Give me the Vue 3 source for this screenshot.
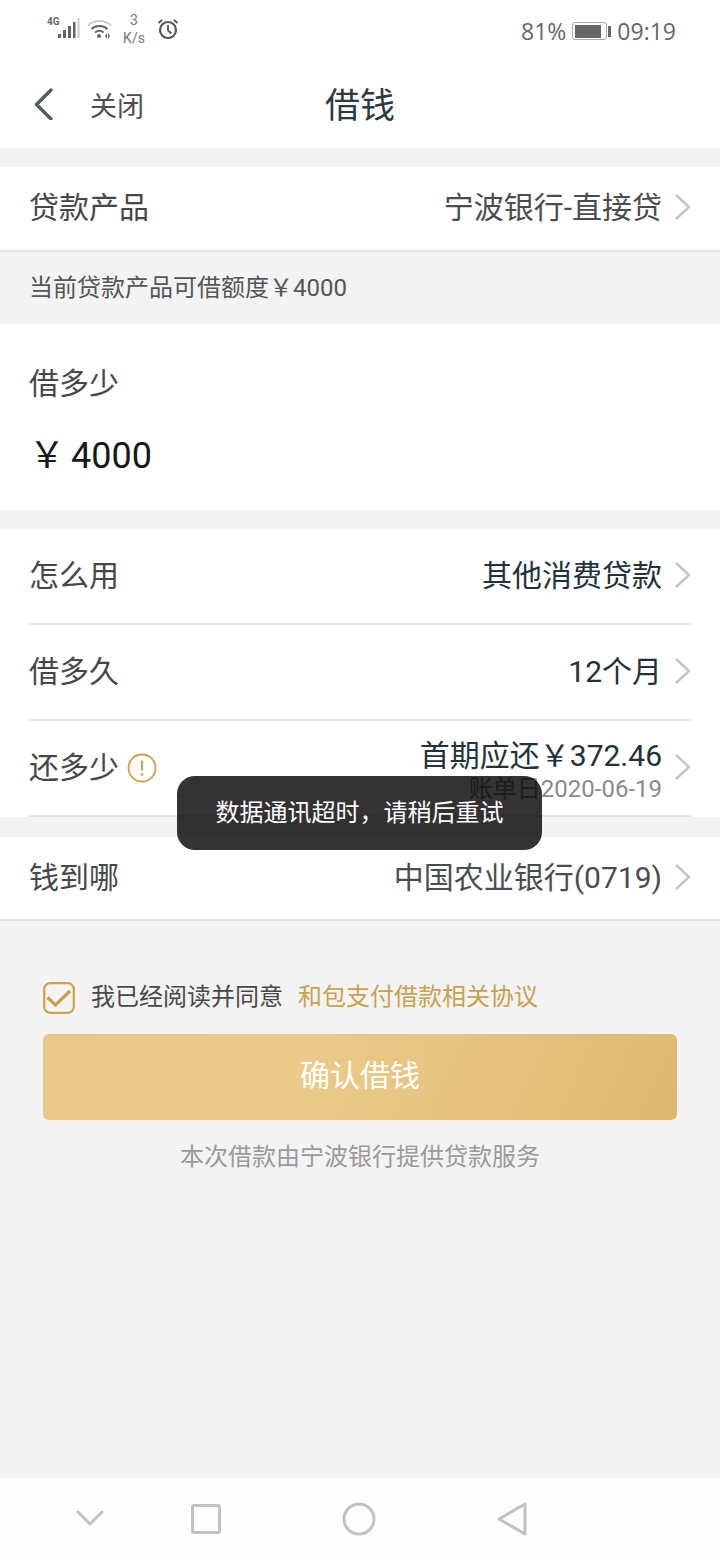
<script setup>
const sections = [
  { label: '怎么用', value: '其他消费贷款' },
  { label: '借多久', value: '12个月' },
]
</script>

<template>
  <div class="page">
    <div class="status">
      <div class="status-left">
        <div class="net">
          <span class="net-label">4G</span>
          <svg class="signal" width="22" height="22" viewBox="0 0 22 22">
            <rect x="0" y="16" width="3" height="4" fill="#666" />
            <rect x="5" y="12" width="3" height="8" fill="#666" />
            <rect x="10" y="8" width="3" height="12" fill="#666" />
            <rect x="15" y="4" width="2.5" height="16" fill="#666" />
            <rect x="19.5" y="0" width="2" height="20" fill="#ccc" />
          </svg>
        </div>
        <svg class="wifi" width="26" height="22" viewBox="0 0 26 22" fill="none">
          <path d="M1 7.5C7 1.5 18 1.5 24 7.5" stroke="#ccc" stroke-width="2" />
          <path d="M4.5 11C9 7 16 7 20.5 11" stroke="#666" stroke-width="2" />
          <path d="M8 14.5C10.5 12.5 14 12.5 16.5 14.5" stroke="#666" stroke-width="2" />
          <circle cx="12" cy="18" r="2" fill="#666" />
          <path d="M18 19l2-3v6zM23 19l-2-3v6z" fill="#666" transform="translate(0 -1)" />
        </svg>
        <div class="speed"><span>3</span><span>K/s</span></div>
        <svg class="alarm" width="22" height="22" viewBox="0 0 22 22" fill="none">
          <circle cx="11" cy="12" r="8" stroke="#555" stroke-width="2.2" />
          <path d="M11 7v5.5l3.5 3" stroke="#555" stroke-width="1.8" />
          <path d="M1.5 5l3.5-3M20.5 5L17 2" stroke="#555" stroke-width="2" />
        </svg>
      </div>
      <div class="status-right">
        <span>81%</span>
        <div class="battery"><div class="battery-body"><div class="battery-fill"></div></div><div class="battery-cap"></div></div>
        <span>09:19</span>
      </div>
    </div>

    <header class="header">
      <div class="header-left">
        <svg width="20" height="32" viewBox="0 0 20 32" fill="none">
          <path d="M18 2L3.5 16.5L18 31" stroke="#555d60" stroke-width="3.4" stroke-linecap="round" stroke-linejoin="round" />
        </svg>
        <span class="close">关闭</span>
      </div>
      <h1 class="title">借钱</h1>
    </header>

    <section class="group first">
      <div class="row short bordered-full">
        <span class="label">贷款产品</span>
        <div class="right">
          <span class="value muted">宁波银行-直接贷</span>
          <svg class="chev" width="18" height="28" viewBox="0 0 18 28" fill="none"><path d="M2 2l13 12L2 26" stroke="#c4c4c4" stroke-width="2.4" /></svg>
        </div>
      </div>
    </section>
    <div class="hint">当前贷款产品可借额度￥4000</div>

    <section class="amount">
      <div class="label">借多少</div>
      <div class="amount-value"><span class="yen">￥</span><span>4000</span></div>
    </section>

    <section class="group gap">
      <div v-for="item in sections" :key="item.label" class="row tall inset">
        <span class="label">{{ item.label }}</span>
        <div class="right">
          <span class="value">{{ item.value }}</span>
          <svg class="chev" width="18" height="28" viewBox="0 0 18 28" fill="none"><path d="M2 2l13 12L2 26" stroke="#c4c4c4" stroke-width="2.4" /></svg>
        </div>
      </div>
      <div class="row tall inset">
        <div class="label-wrap">
          <span class="label">还多少</span>
          <svg width="30" height="30" viewBox="0 0 30 30" fill="none">
            <circle cx="15" cy="15" r="13.5" stroke="#c9a24f" stroke-width="1.8" />
            <path d="M15 7.5v10" stroke="#c9a24f" stroke-width="2" />
            <circle cx="15" cy="21.5" r="1.3" fill="#c9a24f" />
          </svg>
        </div>
        <div class="right">
          <div class="stack">
            <span class="value">首期应还￥372.46</span>
            <span class="sub">账单日2020-06-19</span>
          </div>
          <svg class="chev" width="18" height="28" viewBox="0 0 18 28" fill="none"><path d="M2 2l13 12L2 26" stroke="#c4c4c4" stroke-width="2.4" /></svg>
        </div>
      </div>
    </section>

    <section class="group gap-last">
      <div class="row shorter bordered-full">
        <span class="label">钱到哪</span>
        <div class="right">
          <span class="value muted">中国农业银行(0719)</span>
          <svg class="chev" width="18" height="28" viewBox="0 0 18 28" fill="none"><path d="M2 2l13 12L2 26" stroke="#c4c4c4" stroke-width="2.4" /></svg>
        </div>
      </div>
    </section>

    <div class="bottom">
      <div class="agree">
        <svg width="32" height="32" viewBox="0 0 32 32" fill="none">
          <rect x="1.2" y="1.2" width="29.6" height="29.6" rx="6" stroke="#c9a24f" stroke-width="2.2" />
          <path d="M4.5 15.5l8 7.5L27 9" stroke="#c9a24f" stroke-width="3.2" />
        </svg>
        <span class="agree-text">我已经阅读并同意</span>
        <span class="agree-link">和包支付借款相关协议</span>
      </div>
      <button class="confirm">确认借钱</button>
      <p class="note">本次借款由宁波银行提供贷款服务</p>
    </div>

    <nav class="nav">
      <svg class="nav-down" width="28" height="20" viewBox="0 0 28 20" fill="none"><path d="M2 3l12 12L26 3" stroke="#c2c2c2" stroke-width="3" stroke-linecap="round" stroke-linejoin="round" /></svg>
      <svg width="30" height="30" viewBox="0 0 30 30" fill="none"><rect x="1.5" y="1.5" width="27" height="27" rx="1.5" stroke="#c2c2c2" stroke-width="3" /></svg>
      <svg width="34" height="34" viewBox="0 0 34 34" fill="none"><circle cx="17" cy="17" r="15" stroke="#c2c2c2" stroke-width="3" /></svg>
      <svg width="30" height="34" viewBox="0 0 30 34" fill="none"><path d="M28 2v30L2 17z" stroke="#c2c2c2" stroke-width="3" stroke-linejoin="round" /></svg>
    </nav>

    <div class="toast">数据通讯超时，请稍后重试</div>
  </div>
</template>

<style scoped>
.page {
  position: relative;
  width: 720px;
  height: 1560px;
  display: flex;
  flex-direction: column;
  background: #f3f3f3;
  overflow: hidden;
  font-family: Roboto, "Noto Sans CJK SC", sans-serif;
  color: #3b3f40;
}
.status {
  height: 62px;
  background: #fff;
  display: flex;
  align-items: center;
  justify-content: space-between;
  padding: 0 44px 0 47px;
}
.status-left { display: flex; align-items: center; height: 58px; margin-bottom: 4px; }
.net { display: flex; align-items: flex-end; width: 33px; height: 24px; position: relative; }
.net-label { font-size: 10px; line-height: 10px; font-weight: 700; color: #666; position: absolute; left: 0; top: 0; }
.signal { position: absolute; left: 11px; top: 1px; }
.wifi { margin-left: 7px; }
.speed {
  display: flex; flex-direction: column; align-items: center; width: 26px; margin-left: 8px;
  font-size: 14px; line-height: 18px; color: #777;
}
.alarm { margin-left: 10px; }
.status-right { display: flex; align-items: center; gap: 6px; font-size: 23px; color: #666; font-family: "Open Sans", Roboto, sans-serif; }
.battery { display: flex; align-items: center; gap: 1px; }
.battery-body { width: 35px; height: 18px; border: 1.5px solid #aaa; border-radius: 3px; padding: 1.5px; box-sizing: border-box; }
.battery-fill { width: 86%; height: 100%; background: #666; }
.battery-cap { width: 3px; height: 11px; background: #666; }
.header {
  position: relative;
  height: 86px;
  background: #fff;
  display: flex;
  align-items: center;
  justify-content: center;
}
.header-left { position: absolute; left: 33px; top: 24px; display: flex; align-items: center; gap: 37px; height: 36px; }
.close { font-size: 27px; line-height: 36px; margin-top: 5px; color: #4a4f50; }
.title { margin: 4px 0 0; font-size: 35px; font-weight: 400; color: #2a3a42; line-height: 40px; }
.group { background: #fff; }
.first { margin-top: 19px; }
.gap { margin-top: 19px; }
.gap-last { margin-top: 20px; }
.row { display: flex; align-items: center; justify-content: space-between; box-sizing: border-box; }
.short { height: 85px; padding: 0 29px 2px; }
.shorter { height: 84px; padding: 0 29px; }
.bordered-full { border-bottom: 2px solid #e4e4e4; }
.tall { height: 96px; margin: 0 29px; border-bottom: 2px solid #e4e4e4; }
.label { font-size: 30px; line-height: 36px; color: #444849; }
.label-wrap { display: flex; align-items: center; gap: 8px; }
.right { display: flex; align-items: center; gap: 12px; }
.value { font-size: 30px; color: #22323a; line-height: 36px; }
.muted { color: #484d4f; }
.stack { display: flex; flex-direction: column; align-items: flex-end; margin-top: 5px; }
.sub { font-size: 24px; line-height: 30px; color: #8a8a8a; }
.chev { display: block; margin-right: -1px; margin-bottom: 2px; }
.hint { height: 72px; display: flex; align-items: center; padding-left: 29px; font-size: 24px; line-height: 30px; color: #555; box-sizing: border-box; }
.amount { background: #fff; height: 186px; padding: 40px 29px 0; box-sizing: border-box; }
.amount .label { line-height: 40px; }
.amount-value { display: flex; align-items: center; margin-top: 30px; font-size: 36px; line-height: 44px; color: #15191b; }
.yen { width: 42px; text-align: left; font-size: 36px; line-height: 44px; }
.bottom { flex: 1; display: flex; flex-direction: column; padding: 0 43px; }
.agree { display: flex; align-items: center; margin-top: 60px; height: 34px; }
.agree-text { margin: 0 0 2px 16px; font-size: 24px; line-height: 30px; color: #484848; }
.agree-link { margin: 0 0 2px 15px; font-size: 24px; line-height: 30px; color: #c9a24f; }
.confirm {
  margin-top: 19px;
  height: 86px;
  width: 634px;
  border: 0;
  border-radius: 6px;
  background: linear-gradient(115deg, #e9c988 0%, #ebcb8b 40%, #deb86f 100%);
  color: #fff;
  font-size: 30px;
  line-height: 36px;
  font-family: inherit;
  padding: 0 0 2px;
}
.note { margin: 20px 0 0; text-align: center; font-size: 24px; line-height: 34px; color: #9a9a9a; }
.nav {
  height: 82px;
  background: #fdfdfd;
  display: flex;
  align-items: center;
  padding-left: 76px;
  gap: 121px;
}
.nav-down { margin-right: -34px; }
.toast {
  position: absolute;
  left: 177px;
  top: 776px;
  width: 365px;
  height: 74px;
  display: flex;
  align-items: center;
  justify-content: center;
  border-radius: 18px;
  background: rgba(0, 0, 0, 0.8);
  color: #fff;
  font-size: 24px;
  line-height: 30px;
}
</style>
